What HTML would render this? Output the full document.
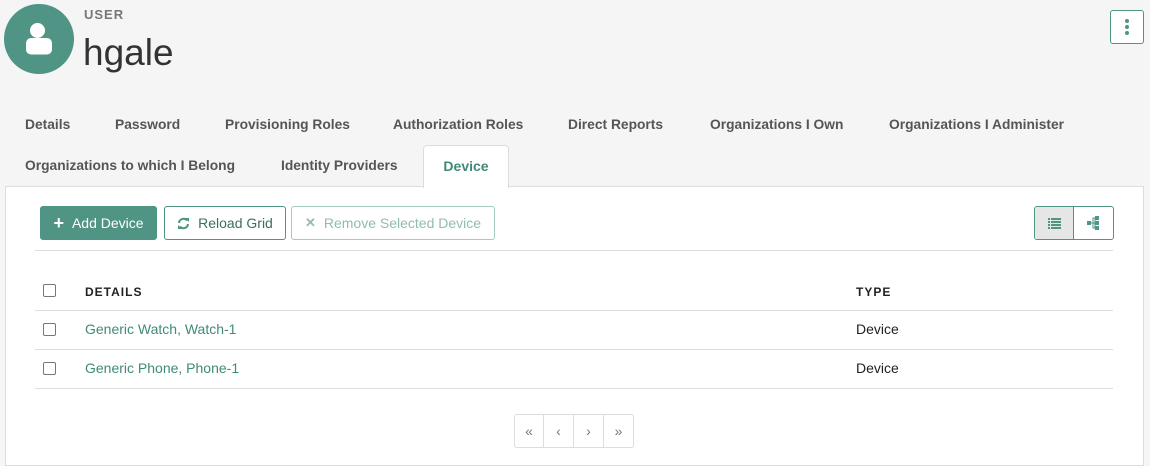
<!DOCTYPE html><html><head><style>
*{box-sizing:border-box;margin:0;padding:0}
body{width:1150px;height:455px;background:#f5f5f5;font-family:"Liberation Sans",Arial,sans-serif;position:relative;overflow:hidden;color:#222}
.a{position:absolute;white-space:nowrap}
.tab{font-size:13.8px;font-weight:bold;color:#555}
.btn{position:absolute;top:206px;height:34px;border:1px solid #4f9484;border-radius:3px;font-size:14px;display:flex;align-items:center;justify-content:center;gap:8px}
.cb{position:absolute;left:43px;width:13px;height:13px;border:1px solid #777;border-radius:2px;background:#fff}
.ln{position:absolute;left:35px;width:1078px;height:1px;background:#ddd}
.lk{color:#3f8a78;font-size:14px}
.pg{position:absolute;top:414px;width:30px;height:34px;border:1px solid #ddd;display:flex;align-items:center;justify-content:center;color:#777;font-size:14px;background:#fff}
</style></head><body>
<div class="a" style="left:4px;top:4px;width:70px;height:70px;border-radius:50%;background:#4f9484">
<svg width="70" height="70" viewBox="0 0 70 70"><circle cx="33.5" cy="26.5" r="7.5" fill="#fff"/><rect x="22" y="34" width="26" height="16.5" rx="5" fill="#fff"/></svg></div>
<div class="a" style="left:84px;top:7px;font-size:13px;font-weight:bold;color:#777;letter-spacing:1px">USER</div>
<div class="a" style="left:83px;top:32px;font-size:37px;font-weight:300;color:#333">hgale</div>
<div class="a" style="left:1110px;top:10px;width:34px;height:34px;border:1px solid #4f9484;border-radius:3px;background:#fff">
<svg width="32" height="32"><circle cx="16" cy="10" r="2" fill="#4f9484"/><circle cx="16" cy="16" r="2" fill="#4f9484"/><circle cx="16" cy="22" r="2" fill="#4f9484"/></svg></div>
<div class="a tab" style="left:25px;top:117px">Details</div>
<div class="a tab" style="left:115px;top:117px">Password</div>
<div class="a tab" style="left:225px;top:117px">Provisioning Roles</div>
<div class="a tab" style="left:393px;top:117px">Authorization Roles</div>
<div class="a tab" style="left:568px;top:117px">Direct Reports</div>
<div class="a tab" style="left:710px;top:117px">Organizations I Own</div>
<div class="a tab" style="left:889px;top:117px">Organizations I Administer</div>
<div class="a tab" style="left:25px;top:158px">Organizations to which I Belong</div>
<div class="a tab" style="left:281px;top:158px">Identity Providers</div>
<div class="a" style="left:5px;top:186px;width:1139px;height:280px;background:#fff;border:1px solid #ddd"></div>
<div class="a" style="left:423px;top:145px;width:86px;height:43px;background:#fff;border:1px solid #ddd;border-bottom:none;border-radius:4px 4px 0 0;text-align:center;padding-top:12px;font-size:14px;font-weight:bold;color:#3f8a78">Device</div>
<div class="btn" style="left:40px;width:117px;background:#4f9484;color:#fff"><span style="font-size:18px;font-weight:bold">+</span>Add Device</div>
<div class="btn" style="left:164px;width:122px;background:#fff;color:#3a6e61"><svg width="13" height="13" viewBox="0 0 13 13"><path d="M2 6 A4.5 4.5 0 0 1 10 3.5 M11 7 A4.5 4.5 0 0 1 3 9.5" fill="none" stroke="#4f9484" stroke-width="2"/><path d="M8 1 L12 1 L12 5Z M5 12 L1 12 L1 8Z" fill="#4f9484"/></svg>Reload Grid</div>
<div class="btn" style="left:291px;width:204px;background:#fff;color:#8fbdb1;border-color:#a5cbc1"><span style="font-size:13px;font-weight:bold">✕</span>Remove Selected Device</div>
<div class="ln" style="top:250px"></div>
<div class="a" style="left:1034px;top:206px;width:80px;height:34px;border:1px solid #4f9484;border-radius:3px;background:#fff;overflow:hidden">
<div class="a" style="left:0;top:0;width:39px;height:32px;background:#e6e6e6;border-right:1px solid #4f9484"></div>
<svg class="a" style="left:12px;top:9px" width="16" height="14"><g fill="#4f9484"><rect x="1" y="2" width="2" height="2"/><rect x="4" y="2" width="10" height="2"/><rect x="1" y="5" width="2" height="2"/><rect x="4" y="5" width="10" height="2"/><rect x="1" y="8" width="2" height="2"/><rect x="4" y="8" width="10" height="2"/><rect x="1" y="11" width="2" height="2"/><rect x="4" y="11" width="10" height="2"/></g></svg>
<svg class="a" style="left:51px;top:8px" width="16" height="16"><g fill="#4f9484"><rect x="1" y="6" width="4" height="4"/><rect x="9" y="1" width="4" height="4"/><rect x="9" y="6" width="4" height="4"/><rect x="9" y="11" width="4" height="4"/><path d="M5 8H9M7 3H9V13H7Z" stroke="#4f9484" fill="none"/></g></svg>
</div>
<div class="cb" style="top:284px"></div>
<div class="a" style="left:85px;top:285px;font-size:12px;font-weight:bold;letter-spacing:1px">DETAILS</div>
<div class="a" style="left:856px;top:285px;font-size:12px;font-weight:bold;letter-spacing:1px">TYPE</div>
<div class="ln" style="top:310px"></div>
<div class="cb" style="top:323px"></div>
<div class="a lk" style="left:85px;top:321px">Generic Watch, Watch-1</div>
<div class="a" style="left:856px;top:321px;font-size:14px">Device</div>
<div class="ln" style="top:349px"></div>
<div class="cb" style="top:362px"></div>
<div class="a lk" style="left:85px;top:360px">Generic Phone, Phone-1</div>
<div class="a" style="left:856px;top:360px;font-size:14px">Device</div>
<div class="ln" style="top:388px"></div>
<div class="pg" style="left:514px;border-radius:3px 0 0 3px">«</div>
<div class="pg" style="left:544px;border-left:none">‹</div>
<div class="pg" style="left:574px;border-left:none">›</div>
<div class="pg" style="left:604px;border-left:none;border-radius:0 3px 3px 0">»</div>
</body></html>
